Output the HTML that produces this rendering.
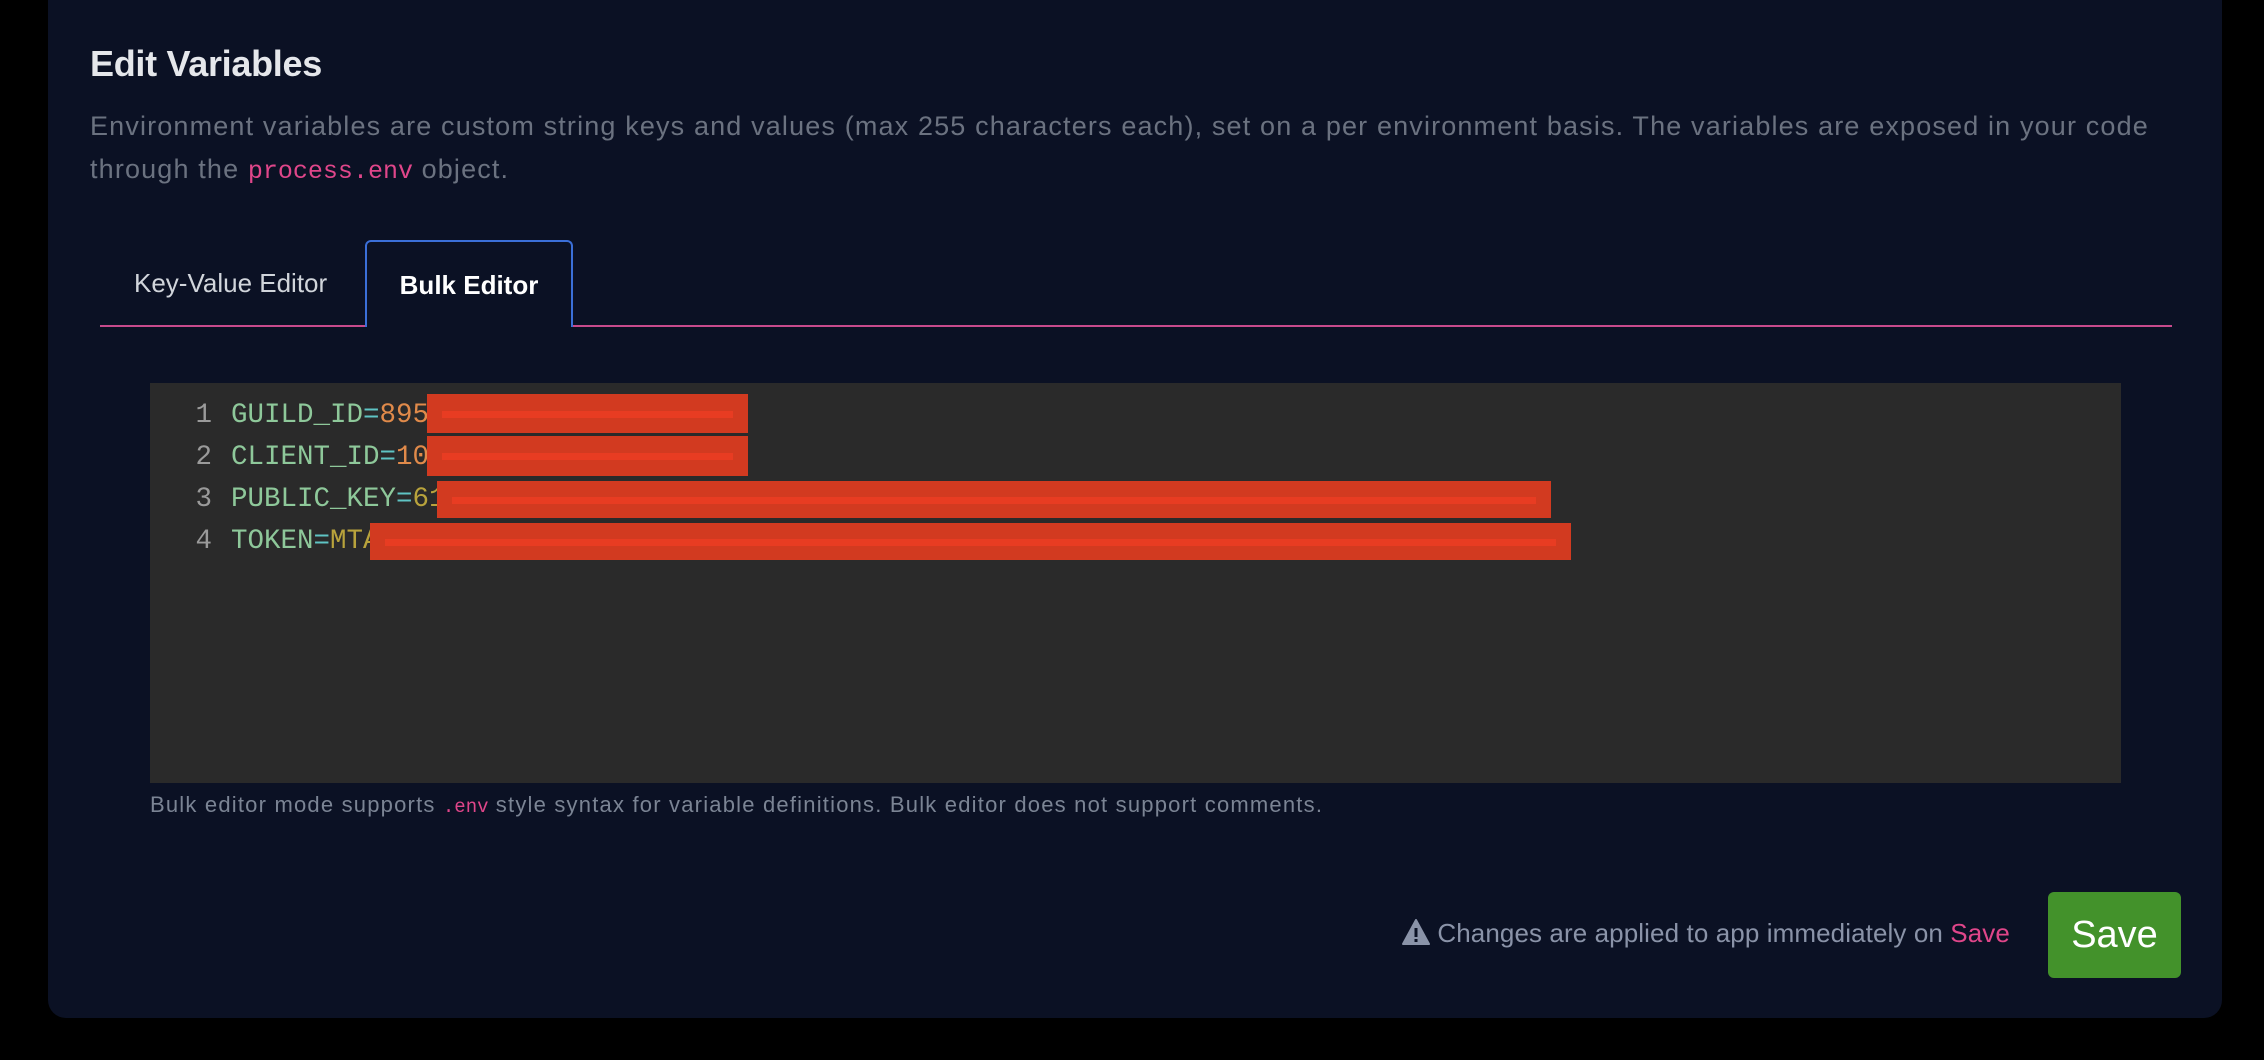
<!DOCTYPE html>
<html><head><meta charset="utf-8"><style>
*{margin:0;padding:0;box-sizing:border-box}
body{width:2264px;height:1060px;background:#000;position:relative;overflow:hidden;font-family:"Liberation Sans",sans-serif}
.panel{position:absolute;left:48px;top:-30px;width:2174px;height:1048px;background:#0b1124;border-radius:18px}
.abs{position:absolute;white-space:nowrap}
h1{position:absolute;left:90px;top:43px;font-size:36px;font-weight:bold;color:#e5e7eb;letter-spacing:-0.3px}
.desc{left:90px;top:105px;font-size:27px;line-height:43px;color:#6b7280;letter-spacing:1.15px}
.mono{font-family:"Liberation Mono",monospace}
.pink{color:#e0468a}
.tab1{left:134px;top:268px;font-size:26px;color:#d1d5db}
.tab2{position:absolute;left:365px;top:240px;width:208px;height:87px;border:2px solid #3b6fd8;border-bottom:none;border-radius:6px 6px 0 0;background:#0b1124;color:#fff;font-weight:bold;font-size:26px;text-align:center;line-height:86px}
.line{position:absolute;left:100px;top:325px;width:2072px;height:2px;background:#c74a8c}
.ed{position:absolute;left:150px;top:383px;width:1971px;height:400px;background:#2a2a2a}
.code{position:absolute;font-family:"Liberation Mono",monospace;font-size:27.5px;line-height:42px;white-space:nowrap}
.n{color:#9a9a9a;position:absolute;left:190px;width:22px;text-align:right}
.k{color:#8ec89a}.e{color:#5fc4c4}.v{color:#e08a4a}.y{color:#b8a33c}
.red{position:absolute;background:#d23a20}
.red i{position:absolute;left:15px;right:15px;top:50%;height:7px;margin-top:-3px;background:#e83c22}
.help{left:150px;top:792px;font-size:22px;color:#7b8494;letter-spacing:1.2px}
.warn{left:1402px;top:918px;font-size:26px;color:#8a93a8;letter-spacing:0.1px}
.btn{position:absolute;left:2048px;top:892px;width:133px;height:86px;background:#43922b;border-radius:6px;color:#fff;font-size:38px;text-align:center;line-height:86px}
</style></head><body>
<div class="panel"></div>
<h1>Edit Variables</h1>
<div class="abs desc">Environment variables are custom string keys and values (max 255 characters each), set on a per environment basis. The variables are exposed in your code<br>through the <span class="mono pink" style="font-size:25px;letter-spacing:0">process.env</span> object.</div>
<div class="abs tab1">Key-Value Editor</div>
<div class="line"></div>
<div class="tab2">Bulk Editor</div>
<div class="ed"></div>
<div class="code n" style="top:395px">1</div>
<div class="code n" style="top:437px">2</div>
<div class="code n" style="top:479px">3</div>
<div class="code n" style="top:521px">4</div>
<div class="code" style="left:231px;top:395px"><span class="k">GUILD_ID</span><span class="e">=</span><span class="v">895</span></div>
<div class="code" style="left:231px;top:437px"><span class="k">CLIENT_ID</span><span class="e">=</span><span class="v">10</span></div>
<div class="code" style="left:231px;top:479px"><span class="k">PUBLIC_KEY</span><span class="e">=</span><span class="y">61</span></div>
<div class="code" style="left:231px;top:521px"><span class="k">TOKEN</span><span class="e">=</span><span class="y">MTA</span></div>
<div class="red" style="left:427px;top:394px;width:321px;height:39px"><i></i></div>
<div class="red" style="left:427px;top:436px;width:321px;height:40px"><i></i></div>
<div class="red" style="left:437px;top:481px;width:1114px;height:37px"><i></i></div>
<div class="red" style="left:370px;top:523px;width:1201px;height:37px"><i></i></div>
<div class="abs help">Bulk editor mode supports <span class="mono pink" style="font-size:19px;letter-spacing:0">.env</span> style syntax for variable definitions. Bulk editor does not support comments.</div>
<div class="abs warn"><svg width="28" height="26" viewBox="0 0 28 26" style="vertical-align:-3px"><path d="M14 1 L27 25 L1 25 Z" fill="#8a93a8" stroke="#8a93a8" stroke-width="2" stroke-linejoin="round"/><rect x="12.5" y="9" width="3" height="9" fill="#0b1124"/><rect x="12.5" y="20" width="3" height="3" fill="#0b1124"/></svg> Changes are applied to app immediately on <span class="pink">Save</span></div>
<div class="btn">Save</div>
</body></html>
